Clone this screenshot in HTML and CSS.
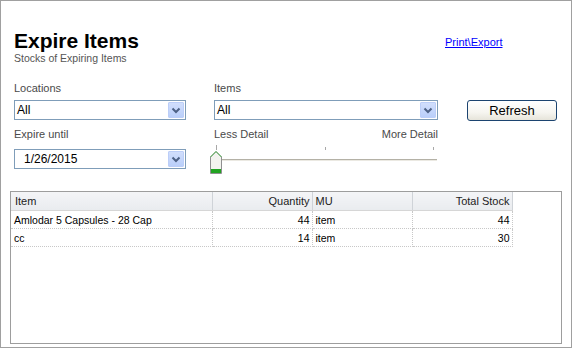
FILE: index.html
```html
<!DOCTYPE html>
<html>
<head>
<meta charset="utf-8">
<link rel="stylesheet" href="styles.css">
</head>
<body>
<div class="window">
  <header class="top">
    <div class="titles">
      <h1 class="title">Expire Items</h1>
      <p class="sub">Stocks of Expiring Items</p>
    </div>
    <a class="link" href="#">Print\Export</a>
  </header>

  <div class="form">
    <div class="field">
      <label class="lbl">Locations</label>
      <div class="select"><span class="val">All</span><span class="dd"><svg width="16" height="16" viewBox="0 0 16 16"><path d="M4.5 6.5 L8 10 L11.5 6.5" fill="none" stroke="#4d6185" stroke-width="2"/></svg></span></div>
    </div>
    <div class="field">
      <label class="lbl">Items</label>
      <div class="select"><span class="val">All</span><span class="dd"><svg width="16" height="16" viewBox="0 0 16 16"><path d="M4.5 6.5 L8 10 L11.5 6.5" fill="none" stroke="#4d6185" stroke-width="2"/></svg></span></div>
    </div>
    <div class="btn-cell">
      <button class="btn" type="button">Refresh</button>
    </div>

    <div class="field">
      <label class="lbl lbl-wide">Expire until</label>
      <div class="select date"><span class="val">1/26/2015</span><span class="dd"><svg width="16" height="16" viewBox="0 0 16 16"><path d="M4.5 6.5 L8 10 L11.5 6.5" fill="none" stroke="#4d6185" stroke-width="2"/></svg></span></div>
    </div>
    <div class="field">
      <div class="lbl-row"><span>Less Detail</span><span>More Detail</span></div>
      <svg class="slider" width="224" height="33" viewBox="0 0 224 33">
        <rect x="2" y="4" width="1" height="5" fill="#a8a8a8"/>
        <rect x="111" y="6" width="1" height="3" fill="#a8a8a8"/>
        <rect x="219" y="6" width="1" height="3" fill="#a8a8a8"/>
        <rect x="7" y="18" width="216" height="1" fill="#b4b1a6"/>
        <rect x="7" y="19" width="216" height="1" fill="#ebe9e2"/>
        <polygon points="-3.5,16 2,10.5 7.5,16 7.5,32.5 -3.5,32.5" fill="#f3f3ef" stroke="#8f9090"/>
        <polyline points="-3.5,16 2,10.5 7.5,16" fill="none" stroke="#4caf4c"/>
        <rect x="-3" y="28" width="10" height="4" fill="#22a322"/>
      </svg>
    </div>
  </div>

  <div class="grid-box">
    <table class="grid">
      <colgroup>
        <col class="c1"><col class="c2"><col class="c3"><col class="c4">
      </colgroup>
      <thead>
        <tr><th class="l">Item</th><th class="r">Quantity</th><th class="l mu">MU</th><th class="r">Total Stock</th></tr>
      </thead>
      <tbody>
        <tr><td class="l">Amlodar 5 Capsules - 28 Cap</td><td class="r">44</td><td class="l mu">item</td><td class="r">44</td></tr>
        <tr><td class="l">cc</td><td class="r">14</td><td class="l mu">item</td><td class="r">30</td></tr>
      </tbody>
    </table>
  </div>
</div>
</body>
</html>
```

FILE: styles.css
```css
html, body {
  margin: 0;
  padding: 0;
  background: #ffffff;
}

.window {
  width: 572px;
  height: 348px;
  box-sizing: border-box;
  border: 1px solid #a0a0a0;
  padding: 29px 0 0 9px;
  font-family: "Liberation Sans", Arial, sans-serif;
  color: #000;
  overflow: hidden;
}

.top {
  display: flex;
  align-items: flex-start;
  padding-left: 4px;
}

.titles {
  width: 431px;
}

.title {
  margin: 0;
  font-size: 21px;
  line-height: 22px;
  font-weight: bold;
  color: #000;
}

.sub {
  margin: 0;
  font-size: 10.5px;
  line-height: 13px;
  color: #555;
}

.link {
  margin-top: 6px;
  font-size: 11px;
  line-height: 13px;
  color: #0000ff;
  text-decoration: underline;
}

.form {
  margin-top: 16px;
  padding-left: 4px;
  display: grid;
  grid-template-columns: 172px 224px 90px;
  column-gap: 28px;
  row-gap: 6px;
}

.field {
  display: flex;
  flex-direction: column;
}

.lbl {
  display: block;
  font-size: 11px;
  line-height: 14px;
  color: #4a4a4a;
  margin-bottom: 5px;
}

.lbl-wide {
  margin-bottom: 8px;
}

.lbl-row {
  display: flex;
  justify-content: space-between;
  font-size: 11px;
  line-height: 14px;
  color: #4a4a4a;
}

.select {
  height: 20px;
  box-sizing: border-box;
  border: 1px solid #7f9db9;
  padding: 1px;
  display: flex;
  align-items: center;
  font-size: 12px;
  background: #fff;
}

.select .val {
  padding-left: 1px;
}

.select.date .val {
  padding-left: 8px;
}

.dd {
  margin-left: auto;
  width: 16px;
  height: 16px;
  box-sizing: border-box;
  border: 1px solid #bccef8;
  border-radius: 1px;
  background: linear-gradient(#d1defc, #bacffa);
  display: flex;
}

.dd svg {
  margin: -1px;
}

.btn-cell {
  padding-top: 19px;
  padding-left: 1px;
}

.btn {
  display: block;
  width: 90px;
  height: 21px;
  box-sizing: border-box;
  border: 1px solid #1c4470;
  border-radius: 3px;
  background: linear-gradient(#ffffff 0%, #f6f5f0 60%, #e6e4da 100%);
  font-family: "Liberation Sans", Arial, sans-serif;
  font-size: 13px;
  line-height: 17px;
  color: #000;
  padding: 0;
}

.slider {
  display: block;
  overflow: visible;
}

.grid-box {
  margin-top: 17px;
  width: 552px;
  height: 153px;
  box-sizing: border-box;
  border: 1px solid #9d9d9d;
  background: #fff;
}

.grid {
  border-collapse: collapse;
  table-layout: fixed;
  width: 501px;
  font-size: 10.5px;
}

.c1 { width: 201px; }
.c2 { width: 100px; }
.c3 { width: 100px; }
.c4 { width: 100px; }

.grid th {
  height: 18px;
  padding: 0 2px 0 4px;
  font-weight: normal;
  font-size: 11px;
  color: #222;
  background: linear-gradient(#f4f5f7, #e9ecef);
  border-right: 1px solid #cfd3d8;
  border-bottom: 1px solid #d6d6d6;
  white-space: nowrap;
  overflow: hidden;
}

.grid td {
  height: 17px;
  padding: 0 2px 0 3px;
  border-right: 1px dotted #c8c8c8;
  border-bottom: 1px dotted #c8c8c8;
  white-space: nowrap;
  overflow: hidden;
}

.grid .l { text-align: left; }
.grid .r { text-align: right; }
.grid td.l { padding-left: 3px; }
.grid .mu { padding-left: 3px; }
```
